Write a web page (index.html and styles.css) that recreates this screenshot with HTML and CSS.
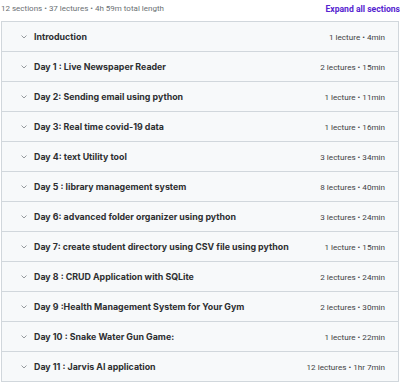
FILE: index.html
```html
<!DOCTYPE html>
<html>
<head>
  <meta charset="UTF-8">
  <title>Course content</title>
  <link rel="stylesheet" href="styles.css">
</head>
<body>
  <div class="curriculum">
    <div class="summary">
      <span class="stats">12 sections &bull; 37 lectures &bull; 4h 59m total length</span>
      <span class="expand">Expand all sections</span>
    </div>
    <div class="sections">
      <div class="section"><span class="chev"><svg width="6" height="4" viewBox="0 0 6 4"><path d="M0.5 0.5 L3 3 L5.5 0.5" fill="none" stroke="#8a8f93" stroke-width="0.9"/></svg></span><span class="title">Introduction</span><span class="meta">1 lecture &bull; 4min</span></div>
      <div class="section"><span class="chev"><svg width="6" height="4" viewBox="0 0 6 4"><path d="M0.5 0.5 L3 3 L5.5 0.5" fill="none" stroke="#8a8f93" stroke-width="0.9"/></svg></span><span class="title">Day 1 : Live Newspaper Reader</span><span class="meta">2 lectures &bull; 15min</span></div>
      <div class="section"><span class="chev"><svg width="6" height="4" viewBox="0 0 6 4"><path d="M0.5 0.5 L3 3 L5.5 0.5" fill="none" stroke="#8a8f93" stroke-width="0.9"/></svg></span><span class="title">Day 2: Sending email using python</span><span class="meta">1 lecture &bull; 11min</span></div>
      <div class="section"><span class="chev"><svg width="6" height="4" viewBox="0 0 6 4"><path d="M0.5 0.5 L3 3 L5.5 0.5" fill="none" stroke="#8a8f93" stroke-width="0.9"/></svg></span><span class="title">Day 3: Real time covid-19 data</span><span class="meta">1 lecture &bull; 16min</span></div>
      <div class="section"><span class="chev"><svg width="6" height="4" viewBox="0 0 6 4"><path d="M0.5 0.5 L3 3 L5.5 0.5" fill="none" stroke="#8a8f93" stroke-width="0.9"/></svg></span><span class="title">Day 4: text Utility tool</span><span class="meta">3 lectures &bull; 34min</span></div>
      <div class="section"><span class="chev"><svg width="6" height="4" viewBox="0 0 6 4"><path d="M0.5 0.5 L3 3 L5.5 0.5" fill="none" stroke="#8a8f93" stroke-width="0.9"/></svg></span><span class="title">Day 5 : library management system</span><span class="meta">8 lectures &bull; 40min</span></div>
      <div class="section"><span class="chev"><svg width="6" height="4" viewBox="0 0 6 4"><path d="M0.5 0.5 L3 3 L5.5 0.5" fill="none" stroke="#8a8f93" stroke-width="0.9"/></svg></span><span class="title">Day 6: advanced folder organizer using python</span><span class="meta">3 lectures &bull; 24min</span></div>
      <div class="section"><span class="chev"><svg width="6" height="4" viewBox="0 0 6 4"><path d="M0.5 0.5 L3 3 L5.5 0.5" fill="none" stroke="#8a8f93" stroke-width="0.9"/></svg></span><span class="title">Day 7: create student directory using CSV file using python</span><span class="meta">1 lecture &bull; 15min</span></div>
      <div class="section"><span class="chev"><svg width="6" height="4" viewBox="0 0 6 4"><path d="M0.5 0.5 L3 3 L5.5 0.5" fill="none" stroke="#8a8f93" stroke-width="0.9"/></svg></span><span class="title">Day 8 : CRUD Application with SQLite</span><span class="meta">2 lectures &bull; 24min</span></div>
      <div class="section"><span class="chev"><svg width="6" height="4" viewBox="0 0 6 4"><path d="M0.5 0.5 L3 3 L5.5 0.5" fill="none" stroke="#8a8f93" stroke-width="0.9"/></svg></span><span class="title">Day 9 :Health Management System for Your Gym</span><span class="meta">2 lectures &bull; 30min</span></div>
      <div class="section"><span class="chev"><svg width="6" height="4" viewBox="0 0 6 4"><path d="M0.5 0.5 L3 3 L5.5 0.5" fill="none" stroke="#8a8f93" stroke-width="0.9"/></svg></span><span class="title">Day 10 : Snake Water Gun Game:</span><span class="meta">1 lecture &bull; 22min</span></div>
      <div class="section"><span class="chev"><svg width="6" height="4" viewBox="0 0 6 4"><path d="M0.5 0.5 L3 3 L5.5 0.5" fill="none" stroke="#8a8f93" stroke-width="0.9"/></svg></span><span class="title">Day 11 : Jarvis AI application</span><span class="meta">12 lectures &bull; 1hr 7min</span></div>
    </div>
  </div>
</body>
</html>
```

FILE: styles.css
```css
html, body {
	margin:0px;
	padding:0px;
	background:#ffffff;
}

body {
	font-family:"Roboto","Liberation Sans",sans-serif;
	color:#2d2f31;
}

.curriculum {
	width:398px;
	padding:0px 1px 0px 1px;
}

.summary {
	display:flex;
	justify-content:space-between;
	align-items:center;
	height:21px;
}

.stats {
	font-size:8px;
	color:#6a6f73;
	margin-top:-4px;
}

.expand {
	font-size:8.6px;
	font-weight:700;
	color:#5624d0;
	margin-top:-4px;
	margin-right:-1px;
}

.sections {
	border:1px solid #d1d7dc;
	border-bottom:none;
}

.section {
	display:flex;
	align-items:center;
	height:29px;
	background:#f7f9fa;
	border-bottom:1px solid #d1d7dc;
	padding:0px 13px 0px 19px;
}

.chev {
	display:flex;
	width:13px;
	margin-top:1px;
}

.title {
	flex:1;
	font-family:"Inter","Liberation Sans",sans-serif;
	font-size:8.85px;
	font-weight:700;
	color:#2d2f31;
}

.meta {
	font-size:8.1px;
	color:#3e4143;
}
```
